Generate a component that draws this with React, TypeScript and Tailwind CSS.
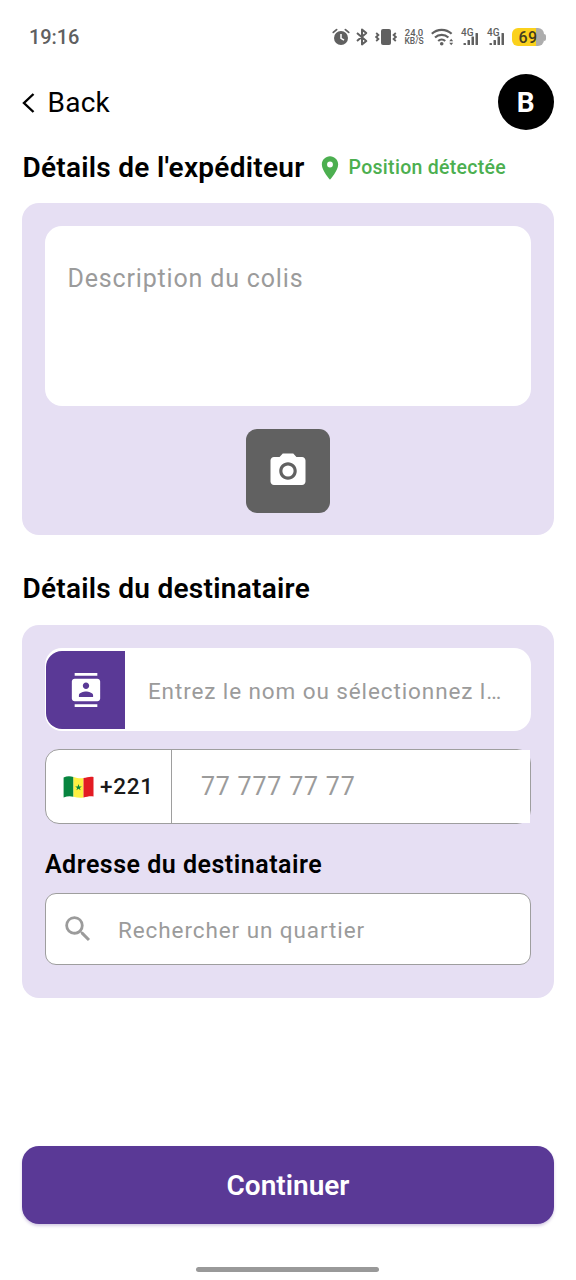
import { MdCameraAlt, MdContacts, MdPlace, MdSearch } from 'react-icons/md';

const SIGNAL_BARS = [
  { x: 0, height: 2 },
  { x: 4, height: 5 },
  { x: 8, height: 8.5 },
  { x: 12, height: 12 },
];

function AlarmIcon() {
  return (
    <svg className="h-[18px] w-[18px]" viewBox="0 0 18 18" fill="none" stroke="currentColor">
      <circle cx="9" cy="10" r="7" fill="currentColor" stroke="none" />
      <path d="M1.3 4.4 4.6 1.6M16.7 4.4l-3.3-2.8" strokeWidth="1.8" strokeLinecap="round" />
      <path d="M9 6v4.3l3 1.8" stroke="white" strokeWidth="1.5" />
    </svg>
  );
}

function BluetoothIcon() {
  return (
    <svg className="h-[18px] w-[14px]" viewBox="0 0 14 18" fill="none" stroke="currentColor" strokeWidth="2">
      <path d="M2 5l9.300 8L7 16.400V1.600L11.300 5 2 13" strokeLinejoin="round" />
    </svg>
  );
}

function VibrateIcon() {
  return (
    <svg className="h-[18px] w-[22px]" viewBox="0 0 22 18" fill="none" stroke="currentColor" strokeWidth="1.8">
      <rect x="6" y="1" width="10" height="16" rx="2" fill="currentColor" stroke="none" />
      <path d="M1.2 5l2.2 2-2.2 2 2.2 2-2.2 2M20.8 5l-2.2 2 2.2 2-2.2 2 2.2 2" />
    </svg>
  );
}

function WifiIcon() {
  return (
    <svg className="h-[18px] w-[23px]" viewBox="0 0 23 18" fill="none" stroke="currentColor" strokeWidth="2.2">
      <path d="M.8 5.800a14.400 14.400 0 0 1 19.800 0" />
      <path d="M4 9.500a9.800 9.800 0 0 1 13.400 0" />
      <path d="M7.200 13a5.200 5.200 0 0 1 7 0" />
      <circle cx="10.7" cy="15.8" r="1.8" fill="currentColor" stroke="none" />
      <path d="M18.2 13.2l2-2.4 2 2.4zM18.2 14.8h4l-2 2.4z" fill="currentColor" stroke="none" />
    </svg>
  );
}

function MobileSignal() {
  return (
    <div className="relative h-[18px] w-[18px]">
      <span className="absolute top-0 left-0 text-[10px] leading-[9px] font-medium">4G</span>
      <svg className="absolute right-0 bottom-px h-[12px] w-[16px]" viewBox="0 0 15 12" fill="currentColor">
        {SIGNAL_BARS.map((bar) => (
          <rect key={bar.x} x={bar.x} y={12 - bar.height} width="2.5" height={bar.height} rx="0.5" />
        ))}
      </svg>
    </div>
  );
}

function StatusBar() {
  return (
    <div className="flex h-[74px] items-center pr-[30px] pl-[29px] text-[#606060]">
      <span className="text-[20px] font-medium tracking-[-0.1px]">19:16</span>
      <div className="ml-auto flex items-center">
        <AlarmIcon />
        <div className="ml-[5px]">
          <BluetoothIcon />
        </div>
        <div className="ml-[6px]">
          <VibrateIcon />
        </div>
        <div className="ml-[7px] flex w-[20px] flex-col items-center text-[9.5px] leading-[9px] font-medium whitespace-nowrap">
          <div>24,0</div>
          <div className="text-[8.5px]">KB/S</div>
        </div>
        <div className="ml-[7px]">
          <WifiIcon />
        </div>
        <div className="ml-[7px] flex gap-[8px]">
          <MobileSignal />
          <MobileSignal />
        </div>
        <div className="ml-[7px] flex items-center">
          <div className="flex h-[18px] w-[32px] items-center justify-center rounded-[6px] bg-linear-to-r from-[#fbd11c] from-75% to-[#adadad] to-75% pt-px text-[16px] font-medium tracking-[0.3px] text-[#443d20]">
            69
          </div>
          <div className="h-[7px] w-[2px] rounded-r-full bg-[#adadad]" />
        </div>
      </div>
    </div>
  );
}

function SenegalFlag() {
  return (
    <svg className="h-[24px] w-[31px]" viewBox="0 0 31 24">
      <path d="M.6 2.6C4 .9 7.200 1.100 10.500 2v19.700C7.200 20.800 4 21 .6 22.600z" fill="#07853f" />
      <path d="M10.500 2c3.500.9 6.600 1.700 10 1v19.500c-3.400.7-6.500.1-10-.8z" fill="#fdef42" />
      <path d="M20.500 3c3.500-.6 6.500-1.800 10-1v19.600c-3.500-.7-6.500.2-10 .9z" fill="#e31b23" />
      <path d="M15.500 9l.8 2.400h2.500l-2 1.500.8 2.400-2.100-1.500-2.100 1.500.8-2.400-2-1.500h2.500z" fill="#07853f" />
    </svg>
  );
}

function SenderCard() {
  return (
    <section className="flex h-[332px] flex-col items-center rounded-[17px] bg-[#e6dff3] p-[22.5px]">
      <div className="h-[180.5px] w-full rounded-[17px] bg-white px-[22.5px] pt-[37px] text-[25px] leading-[32px] tracking-[0.84px] text-[#9b9b9b]">
        Description du colis
      </div>
      <button className="mt-[22.5px] flex h-[84px] w-[84px] items-center justify-center rounded-[11px] bg-[#616161] text-white">
        <MdCameraAlt className="h-[42px] w-[42px]" />
      </button>
    </section>
  );
}

function RecipientCard() {
  return (
    <section className="mt-[18px] h-[373px] rounded-[17px] bg-[#e6dff3] px-[22.5px] pt-[23px]">
      <div className="flex h-[83px] items-center rounded-[17px] bg-white p-[1.5px]">
        <button className="flex h-[78px] w-[78.5px] shrink-0 items-center justify-center rounded-l-[16px] bg-[#5a3996] text-white">
          <MdContacts className="h-[34px] w-[34px]" />
        </button>
        <span className="mt-[4px] ml-[23px] text-[22.5px] tracking-[0.9px] whitespace-nowrap text-[#9b9b9b]">
          Entrez le nom ou sélectionnez l…
        </span>
      </div>

      {/* Phone field, the number area covers the right corners of the border */}
      <div className="mt-[18px] flex h-[75px] rounded-[14px] border-[1.5px] border-[#9e9e9e] bg-white">
        <div className="flex w-[126px] shrink-0 items-center border-r-[1.5px] border-[#9e9e9e] pl-[17px] text-[22.5px] font-medium text-[#1a1a1a]">
          <SenegalFlag />
          <span className="ml-[6px] tracking-[0.8px]">+221</span>
        </div>
        <div className="flex grow items-center bg-white pl-[29px] text-[25px] tracking-[0.8px] text-[#9b9b9b]">
          77 777 77 77
        </div>
      </div>

      <h3 className="mt-[24px] text-[25px] leading-[34px] font-semibold tracking-[0.5px] text-black">Adresse du destinataire</h3>
      <div className="mt-[11px] flex h-[72px] items-center rounded-[11px] border-[1.5px] border-[#9e9e9e] bg-white pl-[15px] text-[#9b9b9b]">
        <MdSearch className="h-[34px] w-[34px]" />
        <span className="mt-[3px] ml-[23px] text-[22.5px] tracking-[0.92px]">Rechercher un quartier</span>
      </div>
    </section>
  );
}

export default function App() {
  return (
    <div className="flex h-[1280px] w-[576px] flex-col overflow-hidden bg-white font-[Roboto,sans-serif]">
      <StatusBar />
      <main className="flex grow flex-col px-[22.4px]">
        <header className="flex h-[56px] items-center justify-between">
          <button className="flex items-center pt-px text-[28px] tracking-[0.3px] text-black">
            <svg className="h-[20px] w-[13px]" viewBox="0 0 13 20" fill="none" stroke="currentColor" strokeWidth="2.4">
              <path d="M11.500 1 2 10l9.500 9" />
            </svg>
            <span className="ml-[12px]">Back</span>
          </button>
          <div className="flex h-[56px] w-[56px] items-center justify-center rounded-full bg-black pt-px text-[28px] font-bold text-white">
            B
          </div>
        </header>

        <div className="mt-[14px] mb-[11px] flex h-[48px] items-center">
          <h2 className="text-[28px] font-semibold tracking-[0.28px] whitespace-nowrap text-black">Détails de l'expéditeur</h2>
          <div className="ml-[11px] flex items-center text-[#4caf50]">
            <MdPlace className="-mt-px h-[28px] w-[28px]" />
            <span className="ml-[5px] text-[19.5px] font-medium tracking-[0.28px] whitespace-nowrap">Position détectée</span>
          </div>
        </div>
        <SenderCard />

        <h2 className="mt-[36px] text-[28px] leading-[36px] font-semibold tracking-[0.28px] text-black">
          Détails du destinataire
        </h2>
        <RecipientCard />

        <button className="mt-[148px] h-[78px] shrink-0 rounded-[17px] bg-[#5a3996] pt-[2px] text-[28px] font-semibold text-white shadow-[0_2px_3px_rgba(90,57,150,0.25)]">
          Continuer
        </button>
      </main>
      <div className="mr-px mb-[8px] h-[5px] w-[183px] self-center rounded-full bg-[#999999]" />
    </div>
  );
}
